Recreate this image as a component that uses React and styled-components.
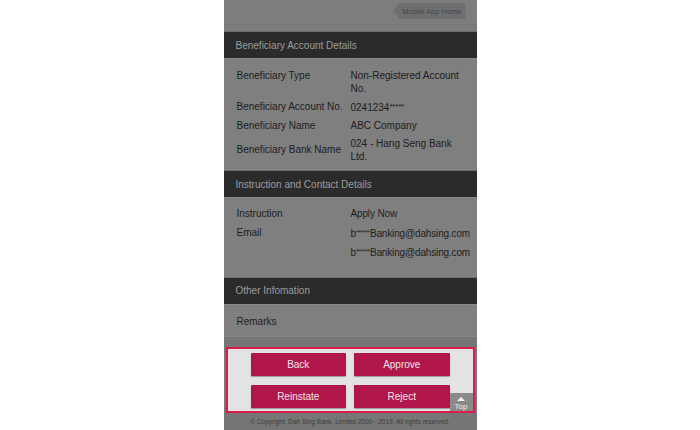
import styled, { createGlobalStyle } from 'styled-components';

const GlobalStyle = createGlobalStyle`
  html, body {
    margin: 0;
    padding: 0;
    background: #ffffff;
  }
  body {
    font-family: "Liberation Sans", Arial, sans-serif;
  }
`;

const Phone = styled.div`
  width: 253px;
  height: 430px;
  margin: 0 auto;
  background: #7f7f7f;
  display: flex;
  flex-direction: column;
  overflow: hidden;
`;

const TopBar = styled.div`
  height: 25px;
  display: flex;
  justify-content: flex-end;
  align-items: flex-start;
  padding: 3px 11px 0 0;
  box-sizing: border-box;
  background: #7d7d7d;
  border-bottom: 1px solid #777777;
`;

const HomeTag = styled.div`
  height: 16px;
  padding: 0 4px 0 9px;
  display: flex;
  align-items: center;
  font-size: 7.5px;
  color: #474747;
  background: #6f6f6f;
  border-radius: 0 2px 2px 0;
  clip-path: polygon(6px 0, 100% 0, 100% 100%, 6px 100%, 0 50%);
`;

const Spacer = styled.div`
  height: 6px;
  background: #7b7b7b;
`;

const SectionHeader = styled.div`
  height: 26px;
  display: flex;
  align-items: center;
  padding-left: 12px;
  font-size: 10px;
  color: #9c9c9c;
  background: #2b2b2b;
  border-top: 1px solid #6c6c6c;
  border-bottom: 1px solid #8a8a8a;
`;

const Rows = styled.div`
  padding: ${(p) => p.$pad || '6px 0 6px'};
  border-bottom: 1px solid #878787;
`;

const Row = styled.div`
  display: grid;
  grid-template-columns: 114px 1fr;
  align-items: ${(p) => (p.$top ? 'start' : 'center')};
  padding: ${(p) => p.$pad || '3px 0 2.5px'};
  padding-left: 13px;
  font-size: 10px;
  line-height: 13px;
  color: #1d1d1d;
`;

const Label = styled.div``;

const Value = styled.div`
  white-space: pre-line;
  letter-spacing: ${(p) => (p.$tight ? '-0.15px' : 'normal')};
`;

const Stars = styled.span`
  font-size: ${(p) => p.$size || '6.5px'};
  letter-spacing: -0.2px;
  vertical-align: 2px;
`;

const ActionArea = styled.div`
  flex: 1;
  display: flex;
  flex-direction: column;
  background: #767676;
  padding-top: 10px;
`;

const ActionBox = styled.div`
  position: relative;
  margin: 0 2px;
  padding: 4px 23px 3px;
  background: #e3e3e3;
  border: 2px solid #d91c4c;
  display: grid;
  grid-template-columns: 1fr 1fr;
  column-gap: 8px;
  row-gap: 9px;
`;

const ActionButton = styled.button`
  height: 23px;
  border: none;
  border-radius: 1px;
  background: #b0164c;
  box-shadow: 0 1px 1px rgba(0, 0, 0, 0.35);
  color: #f2e4ea;
  font-family: "Liberation Sans", Arial, sans-serif;
  font-size: 10px;
  padding: 0;
`;

const TopButton = styled.div`
  position: absolute;
  right: 0;
  bottom: 0;
  width: 23px;
  height: 18px;
  background: #8a8a8a;
  display: flex;
  flex-direction: column;
  align-items: center;
  justify-content: flex-end;
  color: #f0f0f0;
  font-size: 8px;
  line-height: 9px;
`;

const Arrow = styled.div`
  width: 0;
  height: 0;
  border-left: 4px solid transparent;
  border-right: 4px solid transparent;
  border-bottom: 4px solid #f0f0f0;
  margin-bottom: 1px;
`;

const Footer = styled.div`
  flex: 1;
  display: flex;
  align-items: center;
  justify-content: center;
  font-size: 6.5px;
  color: #3c3c3c;
`;

const Masked = ({ head, tail = '', count = 6, size }) => (
  <>
    {head}
    <Stars $size={size}>{'*'.repeat(count)}</Stars>
    {tail}
  </>
);

const beneficiary = [
  { l: 'Beneficiary Type', v: 'Non-Registered Account\nNo.', top: true, pad: '3px 0 1.5px' },
  { l: 'Beneficiary Account No.', v: <Masked head="0241234" count={5} size="8px" /> },
  { l: 'Beneficiary Name', v: 'ABC Company' },
  { l: 'Beneficiary Bank Name', v: '024 - Hang Seng Bank\nLtd.', pad: '2px 0 2.5px' },
];

const contact = [
  ['Instruction', 'Apply Now'],
  ['Email', <Masked head="b" tail="Banking@dahsing.com" />],
  ['', <Masked head="b" tail="Banking@dahsing.com" />],
];

export default function App() {
  return (
    <>
      <GlobalStyle />
      <Phone>
        <TopBar>
          <HomeTag>Mobile App Home</HomeTag>
        </TopBar>
        <Spacer />

        <SectionHeader>Beneficiary Account Details</SectionHeader>
        <Rows $pad="7px 0 4px">
          {beneficiary.map((r) => (
            <Row key={r.l} $top={r.top} $pad={r.pad}>
              <Label>{r.l}</Label>
              <Value>{r.v}</Value>
            </Row>
          ))}
        </Rows>

        <SectionHeader>Instruction and Contact Details</SectionHeader>
        <Rows $pad="6px 0 14px">
          {contact.map(([l, v], i) => (
            <Row key={i}>
              <Label>{l}</Label>
              <Value $tight>{v}</Value>
            </Row>
          ))}
        </Rows>

        <SectionHeader>Other Infomation</SectionHeader>
        <Rows $pad="7px 0 6px">
          <Row>
            <Label>Remarks</Label>
            <Value />
          </Row>
        </Rows>

        <ActionArea>
          <ActionBox>
            <ActionButton>Back</ActionButton>
            <ActionButton>Approve</ActionButton>
            <ActionButton>Reinstate</ActionButton>
            <ActionButton>Reject</ActionButton>
            <TopButton>
              <Arrow />
              Top
            </TopButton>
          </ActionBox>
          <Footer>© Copyright. Dah Sing Bank, Limited 2000 - 2019. All rights reserved.</Footer>
        </ActionArea>
      </Phone>
    </>
  );
}
